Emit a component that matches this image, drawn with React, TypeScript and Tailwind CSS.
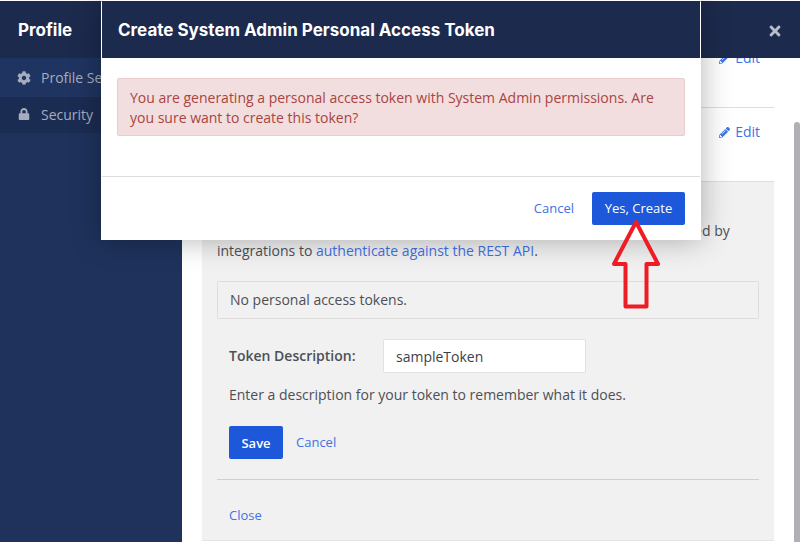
import React from 'react';
import { FaCog, FaLock, FaPencilAlt, FaTimes } from 'react-icons/fa';

const EditLink: React.FC = () => (
  <a className="flex items-center gap-[5px] text-[14px] leading-5 text-[#3f72e4]">
    <FaPencilAlt className="text-[11px]" />
    Edit
  </a>
);

const SettingRow: React.FC = () => (
  <div className="flex h-[74px] items-start justify-end border-b border-[#dddddd] pr-[14px] pt-[14px]">
    <EditLink />
  </div>
);

const Sidebar: React.FC = () => (
  <aside className="w-[182px] shrink-0 bg-[#1e325c] text-[14px] text-[#a5adbe]">
    <div className="flex h-[39px] items-center gap-[10px] bg-[#1f3460] pl-[17px]">
      <FaCog className="text-[14px]" />
      <span className="whitespace-nowrap">Profile Settings</span>
    </div>
    <div className="flex h-[36px] items-center gap-[11px] bg-[#1b2c52] pb-[2px] pl-[18px]">
      <FaLock className="text-[12px]" />
      <span>Security</span>
    </div>
  </aside>
);

const TokenSection: React.FC = () => (
  <section className="h-[359px] border-b border-[#e4e4e4] bg-[#f1f1f1] px-[15px] pt-[39px] text-[14px] leading-5 text-[#4d4f57]">
    <p>
      Personal access tokens function similarly to session tokens and can be used by integrations to{' '}
      <a className="text-[#3f72e4]">authenticate against the REST API</a>.
    </p>
    <div className="mt-5 flex h-[38px] items-center rounded-[2px] border border-[#dddddd] pl-3">
      No personal access tokens.
    </div>
    <div className="mt-5 flex items-center pl-3">
      <label className="w-[154px] font-semibold">Token Description:</label>
      <input
        readOnly
        value="sampleToken"
        className="h-[34px] w-[203px] rounded-[2px] border border-[#e2e2e2] bg-white px-3 text-[14px] text-[#3d3f47] outline-none"
      />
    </div>
    <p className="mt-[12px] pl-3">Enter a description for your token to remember what it does.</p>
    <div className="mt-[21px] flex items-center gap-[13px] pl-3">
      <button className="h-[33px] w-[54px] rounded-[2px] bg-[#1c58d9] text-[13px] font-semibold text-white">Save</button>
      <a className="mb-[2px] text-[13px] text-[#3f72e4]">Cancel</a>
    </div>
    <hr className="mt-5 border-[#cfcfcf]" />
    <a className="mt-[25px] block pl-3 text-[13px] text-[#3f72e4]">Close</a>
  </section>
);

const ConfirmModal: React.FC = () => (
  <div className="absolute left-[101px] top-0 w-[600px] rounded-t-[3px] border-x border-t border-white bg-white shadow-[0_0_30px_rgba(0,0,0,0.3)]">
    <div className="flex h-[57px] items-center bg-[#1c2a4d] pl-[16px] pt-[2px] font-['Inter',sans-serif] text-[17px] font-bold text-white">
      Create System Admin Personal Access Token
    </div>
    <div className="h-[119px] border-b border-[#dddddd] px-[15px] pt-5">
      <div className="h-[58px] rounded-[2px] border border-[#ebcccc] bg-[#f2dede] px-3 pt-[9px] text-[14px] leading-5 text-[#a94442]">
        You are generating a personal access token with System Admin permissions. Are you sure want to create this token?
      </div>
    </div>
    <div className="flex h-[63px] items-center justify-end gap-[18px] px-[15px]">
      <a className="text-[13px] text-[#3f72e4]">Cancel</a>
      <button className="h-[33px] w-[93px] rounded-[2px] bg-[#1c58d9] text-[13px] font-medium text-white">Yes, Create</button>
    </div>
  </div>
);

const App: React.FC = () => (
  <div className="relative h-[542px] w-[800px] overflow-hidden bg-white pt-px font-['Open_Sans',sans-serif]">
    <header className="flex h-[57px] items-center justify-between bg-[#1c2a4d] px-[18px] pt-[2px] text-white">
      <span className="font-['Inter',sans-serif] text-[17px] font-bold">Profile</span>
      <FaTimes className="mr-[-1px] text-[16px] text-[#b9bdc7]" />
    </header>
    <div className="flex h-[484px]">
      <Sidebar />
      <main className="flex-1 overflow-hidden pl-5 pr-[26px]">
        <div className="-mt-[24px]">
          <SettingRow />
          <SettingRow />
          <TokenSection />
        </div>
      </main>
    </div>

    {/* scrollbar thumb */}
    <div className="absolute bottom-0 right-0 top-[122px] w-[6px] rounded-t-[3px] bg-[#b0b0b5]" />

    <ConfirmModal />

    {/* red annotation arrow */}
    <svg className="absolute left-[600px] top-[210px]" width="70" height="105" viewBox="600 210 70 105" fill="none">
      <polygon
        points="636,222 658,264 646.5,264 646.5,306.5 625.5,306.5 625.5,264 614,264"
        stroke="#ee1c25"
        strokeWidth="4"
        strokeLinejoin="round"
      />
    </svg>
  </div>
);

export default App;
